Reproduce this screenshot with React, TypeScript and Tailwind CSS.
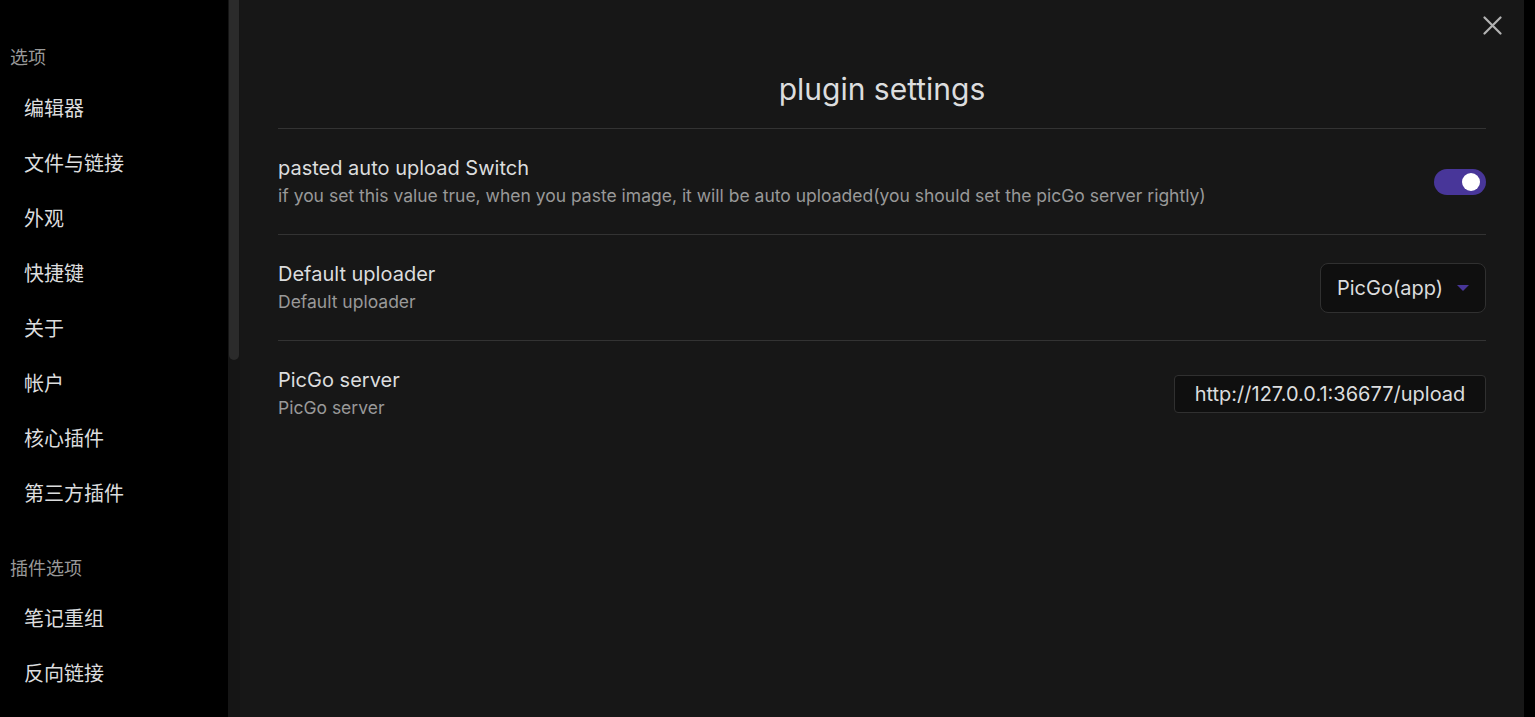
const core = ["编辑器", "文件与链接", "外观", "快捷键", "关于", "帐户", "核心插件", "第三方插件"];
const plugins = ["笔记重组", "反向链接"];

function Sidebar() {
  return (
    <div className="relative w-[240px] shrink-0 bg-black h-full overflow-hidden">
      <div className="w-[228px] pt-[46px]">
        <div className="pl-[10px] text-[18px] leading-[24px] text-[#999]">选项</div>
        <div className="mt-[11px]">
          {core.map((t) => (
            <div key={t} className="pl-[24px] h-[55px] flex items-center text-[20px] text-[#dcddde]">
              {t}
            </div>
          ))}
        </div>
        <div className="pl-[10px] mt-[36px] text-[18px] leading-[24px] text-[#999]">插件选项</div>
        <div className="mt-[10px]">
          {plugins.map((t) => (
            <div key={t} className="pl-[24px] h-[55px] flex items-center text-[20px] text-[#dcddde]">
              {t}
            </div>
          ))}
        </div>
      </div>
      {/* scrollbar */}
      <div className="absolute right-0 top-0 w-[12px] h-full bg-[#151515]">
        <div className="mx-auto w-[10px] h-[360px] rounded-b-[5px] bg-[#2b2b2b]" />
      </div>
    </div>
  );
}

function Row({
  title,
  desc,
  children,
}: {
  title: string;
  desc: string;
  children: React.ReactNode;
}) {
  return (
    <div className="flex items-center justify-between border-b border-[#333] h-[106px] last:border-b-0">
      <div className="-mt-[2px]">
        <div className="text-[20px] leading-[26px] text-[#dcddde]">{title}</div>
        <div className="mt-[4px] text-[17.5px] leading-[22px] text-[#999]">{desc}</div>
      </div>
      {children}
    </div>
  );
}

export default function App() {
  return (
    <div
      className="flex w-[1535px] h-[717px] bg-black overflow-hidden"
      style={{ fontFamily: 'Inter, "Noto Sans CJK SC", sans-serif' }}
    >
      <Sidebar />
      <div className="relative w-[1284px] h-full bg-[#171717] px-[38px]">
        <button className="absolute right-[22px] top-[16px]">
          <svg width="19" height="19" viewBox="0 0 19 19">
            <path d="M1.5 1.5l16 16M17.5 1.5l-16 16" stroke="#b3b3b3" strokeWidth="2.2" strokeLinecap="round" />
          </svg>
        </button>
        <h1 className="pt-[70px] pb-[20px] text-center text-[30px] leading-[38px] text-[#dcddde] border-b border-[#333]">
          plugin settings
        </h1>
        <Row
          title="pasted auto upload Switch"
          desc="if you set this value true, when you paste image, it will be auto uploaded(you should set the picGo server rightly)"
        >
          <div className="w-[52px] h-[26px] rounded-full bg-[#483699] flex items-center justify-end pr-[6px]">
            <div className="w-[18px] h-[18px] rounded-full bg-white" />
          </div>
        </Row>
        <Row title="Default uploader" desc="Default uploader">
          <div className="w-[166px] h-[50px] rounded-[8px] border border-[#303030] bg-[#0f0f0f] flex items-center pl-[16px] pr-[16px] justify-between">
            <span className="text-[20px] text-[#dcddde]">PicGo(app)</span>
            <svg width="12" height="8" viewBox="0 0 12 8">
              <path d="M0 1h12L6 7z" fill="#483699" />
            </svg>
          </div>
        </Row>
        <Row title="PicGo server" desc="PicGo server">
          <div className="w-[312px] h-[38px] rounded-[4px] border border-[#303030] bg-[#0f0f0f] flex items-center justify-center text-[20px] text-[#dcddde]">
            http://127.0.0.1:36677/upload
          </div>
        </Row>
      </div>
      <div className="flex-1 bg-black" />
    </div>
  );
}
